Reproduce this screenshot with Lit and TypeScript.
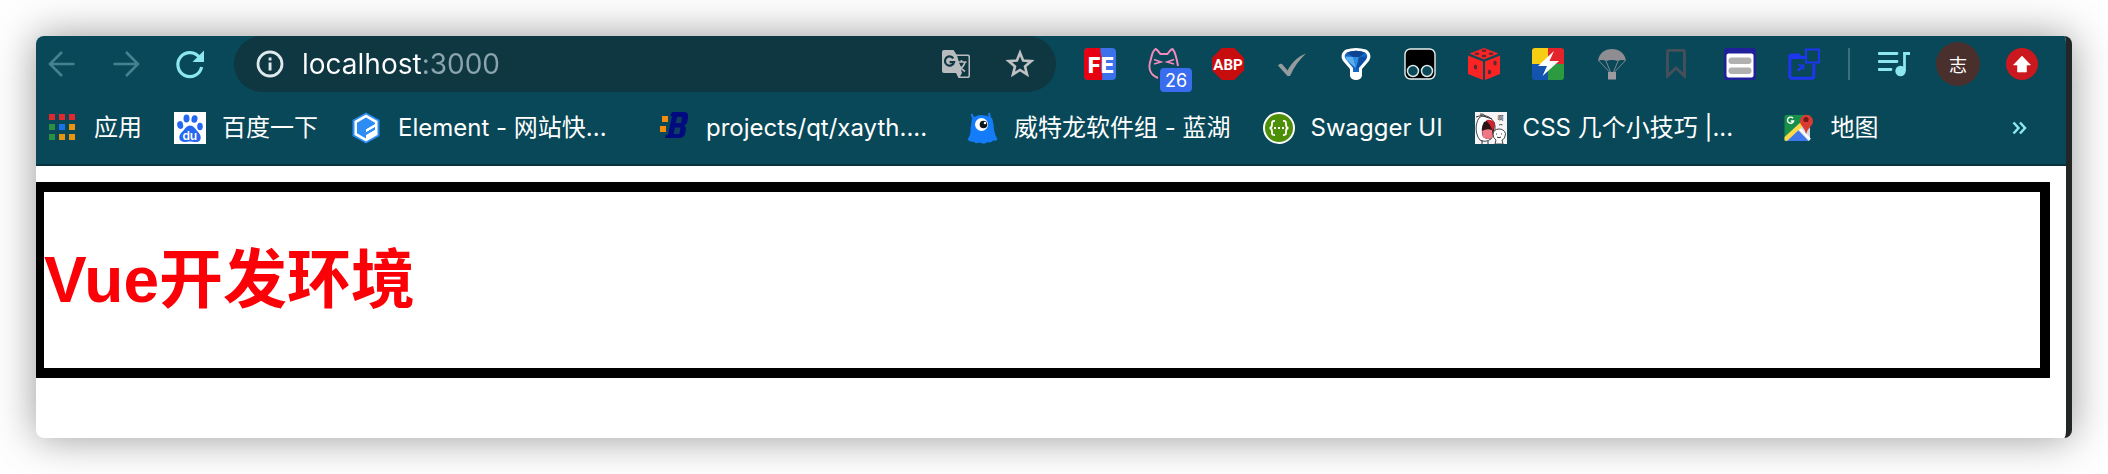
import { LitElement, html, svg, css, nothing, type TemplateResult } from "lit";
import { customElement, property } from "lit/decorators.js";
import { classMap } from "lit/directives/class-map.js";

const icons: Record<string, TemplateResult> = {
  back: svg`<path d="M28.500 16H4.500M16 4 4 16l12 12" fill="none" stroke="#44828f" stroke-width="2.600"/>`,
  forward: svg`<path d="M3.500 16h24M16 4l12 12-12 12" fill="none" stroke="#44828f" stroke-width="2.600"/>`,
  reload: svg`<path d="M25.500 9.500A12 12 0 1 0 27.600 19" fill="none" stroke="#8ce8ee" stroke-width="3.200"/><path d="M30 2.500V14H18.500Z" fill="#8ce8ee"/>`,
  info: svg`<circle cx="16" cy="16" r="12" fill="none" stroke="#dfe8ea" stroke-width="2.800"/><path d="M14.600 9.500h2.900v2.900h-2.900zM14.600 14.600h2.900v8h-2.900z" fill="#dfe8ea"/>`,
  translate: svg`<path d="M4 2h9.500l3 4.500H28a2 2 0 0 1 2 2V28a2 2 0 0 1-2 2H18.500L16 25H4a2 2 0 0 1-2-2V4a2 2 0 0 1 2-2z" fill="#b9bcbf"/><path d="M17.200 8H27.500a1 1 0 0 1 1 1V27.500a1 1 0 0 1-1 1H20l2-3.500z" fill="#0f3742"/><path d="M13.300 10.400A4.600 4.600 0 1 0 14 14.200H9.600" fill="none" stroke="#0f3742" stroke-width="2.200"/><path d="M16.500 14h10M21.500 12v2M25 14c-1 4-4 7-7 9M18.500 16c1.500 3.500 4 6 6.500 7.500" fill="none" stroke="#b9bcbf" stroke-width="1.700"/>`,
  star: svg`<path d="m16 4.800 3.100 7.700 8.200.6-6.300 5.300 2 8-7-4.400-7 4.400 2-8-6.300-5.300 8.200-.6z" fill="none" stroke="#bfc1c3" stroke-width="2.600"/>`,
  fe: svg`<rect width="32" height="32" rx="4" fill="#3b71ea"/><path d="M4 0h12.500c-1 5 2.500 9 1 15-1.500 6 2 11 .5 17H4a4 4 0 0 1-4-4V4a4 4 0 0 1 4-4z" fill="#e60012"/><text x="17" y="24.500" text-anchor="middle" font-family="Inter, sans-serif" font-weight="800" font-size="22" fill="#fff">FE</text>`,
  cat: svg`<path d="M10 30C2 27 0 20 2.500 12.500 4 8 4 3 7.500 1c2.500 1 3.500 3.500 5 5h7C21 4 22.500 1.500 24.500 1c3 3 4 8 5.500 17" fill="none" stroke="#f28bbd" stroke-width="2"/><path d="m6 11.500 7 2.500-7 2M26 11.500 19 14l7 2" fill="none" stroke="#f28bbd" stroke-width="1.600"/>`,
  abp: svg`<path d="M9.700 0h12.600L32 9.700v12.600L22.300 32H9.700L0 22.300V9.700z" fill="#c70d0d"/><text x="16" y="21.500" text-anchor="middle" font-family="Roboto, sans-serif" font-weight="700" font-size="15" fill="#fff">ABP</text>`,
  check: svg`<path d="M2 17.500c1.500-1.800 3.500-2.200 4.500-1l5 6C16 14 22 8.500 30 5.500 23 12 18 19 14 28h-2.500z" fill="#969b9e"/>`,
  diamond: svg`<path d="M6 1.500Q16-1.500 26 1.500C30.500 4 32 9 28.500 13.500L22 21v6.500a6 4.500 0 0 1-12 0V21L3.500 13.500C0 9 1.500 4 6 1.500z" fill="#fff"/><path d="M7 4.500q9-3.500 18 0c2.800 2 2.800 4.500 1 7L19 20v4h-6v-4l-7-8.500c-1.800-2.500-1.800-5 1-7z" fill="#1668c4"/><path d="M7 4.500q9-3.500 18 0l-6 4.500h-6z" fill="#0b4490"/><path d="m5.500 8.500 7.500.5 3 11-10-8.500z" fill="#5ab0ee"/><path d="M13 9h6l-3 11z" fill="#2f8de0"/><path d="m19 9 7.500-.5-.5 3L16 22z" fill="#0c4fa5"/>`,
  monkey: svg`<rect x="1" y="1" width="30" height="30" rx="5.500" fill="#000" stroke="#e8f0f0" stroke-width="1.400"/><circle cx="9" cy="23" r="5.500" fill="#0a4757" stroke="#d7e6e8" stroke-width="1.500"/><circle cx="23" cy="23" r="5.500" fill="#0a4757" stroke="#d7e6e8" stroke-width="1.500"/>`,
  dice: svg`<path d="m16 0 14.500 5.500L16 11.500 1.500 5.500zM0 7.500l15 6V32L0 26zM32 7.500l-15 6V32l15-6z" fill="#fb2424"/><g fill="#5b2a33"><ellipse cx="16" cy="2.800" rx="2.400" ry="1.300"/><ellipse cx="9" cy="5.700" rx="2.400" ry="1.300"/><ellipse cx="16" cy="8" rx="2.400" ry="1.300"/><ellipse cx="23" cy="5.700" rx="2.400" ry="1.300"/><ellipse cx="7.500" cy="19" rx="1.700" ry="2.500"/><ellipse cx="27" cy="15" rx="1.700" ry="2.500"/><ellipse cx="21.500" cy="24" rx="1.700" ry="2.500"/></g>`,
  bolt: svg`<path d="M3 0h13v16H0V3a3 3 0 0 1 3-3z" fill="#f7cf12"/><path d="M16 0h13a3 3 0 0 1 3 3v13H16z" fill="#e3242b"/><path d="M0 16h16v16H3a3 3 0 0 1-3-3z" fill="#1355ae"/><path d="M16 16h16v13a3 3 0 0 1-3 3H16z" fill="#2c9a3e"/><path d="M22 3 6 18h9l-4.500 10L27 13h-9.500z" fill="#fff"/>`,
  parachute: svg`<path d="M2 13C3 5 9 1 16 1s13 4 14 12c-2.500-1.500-6-1.500-8 0-3.500-1.500-8.500-1.500-12 0-2-1.500-5.500-1.500-8 0z" fill="#8e8e92"/><path d="m3 13 10.500 11M10 13l4.500 11M22 13l-4.500 11M29 13 18.500 24" stroke="#7d868c" stroke-width="1"/><path d="M12 24h8v7.500h-8z" fill="#9c9a9f"/>`,
  ribbon: svg`<path d="M9 2.300h14a1.500 1.500 0 0 1 1.500 1.500V28L16 20l-8.500 8V3.800A1.500 1.500 0 0 1 9 2.300z" fill="none" stroke="#47505a" stroke-width="2.800"/>`,
  card: svg`<rect width="32" height="32" rx="3" fill="#20219a"/><rect x="2.500" y="5.500" width="27" height="24" rx="2" fill="#fff"/><rect x="4.500" y="9.500" width="23" height="6.500" rx="3.200" fill="#b0b0b0"/><rect x="4.500" y="19.500" width="23" height="6.500" rx="3.200" fill="#b0b0b0"/>`,
  folder: svg`<path d="M17 9.500H12.500L10.500 7H3.500A1.800 1.800 0 0 0 1.800 8.800V28.500A1.800 1.800 0 0 0 3.600 30.300H24A1.800 1.800 0 0 0 25.800 28.500V16" fill="none" stroke="#1f36f0" stroke-width="3"/><path d="M2 8h9l2 3H2z" fill="#1f36f0"/><rect x="18" y="1.500" width="13" height="13" fill="none" stroke="#1f36f0" stroke-width="2"/><path d="M9 16.500h7.500v6l-2-2-4 3-1.500-2 4-2.500z" fill="#1f36f0"/>`,
  music: svg`<path d="M1 5.500h18M1 13.500h18M1 21.500h12" stroke="#8ce8ee" stroke-width="2.800" stroke-linecap="round"/><path d="M27 5.500h5" stroke="#8ce8ee" stroke-width="3"/><path d="M26.500 4v19" stroke="#8ce8ee" stroke-width="2.800"/><circle cx="22.500" cy="23" r="5.200" fill="#8ce8ee"/>`,
  update: svg`<circle cx="16" cy="16" r="16" fill="#cb171e"/><path d="m16 8 8.500 9h-4v7h-9v-7h-4z" fill="#fff" stroke="#fff" stroke-width=".6"/>`,
  apps: svg`<path d="M3 2h6v6H3zM13 2h6v6h-6zM23 2h6v6h-6z" fill="#e3272c"/><path d="M3 12h6v6H3zM3 22h6v6H3z" fill="#2b8f46"/><path d="M13 12h6v6h-6z" fill="#1a73e8"/><path d="M23 12h6v6h-6zM13 22h6v6h-6zM23 22h6v6h-6z" fill="#e8940f"/>`,
  baidu: svg`<path d="M0 0h32v32H0z" fill="#fff"/><g fill="#2468f2"><ellipse cx="12.500" cy="6.500" rx="3" ry="4"/><ellipse cx="20.500" cy="7" rx="3" ry="3.800" transform="rotate(12 20.500 7)"/><ellipse cx="6.200" cy="13" rx="3" ry="3.900" transform="rotate(-12 6.200 13)"/><ellipse cx="26" cy="14.500" rx="2.800" ry="3.700"/><path d="M16 13.500c4 0 5.500 4 8.500 7 3.500 3.500 3 9.500-2 9.500-3 .2-4-.6-6.500-.6S12.500 30.200 10 30c-5.500-.5-6-6.500-2-10 3-2.500 4-6.500 8-6.500z"/></g><text x="15.800" y="27.500" text-anchor="middle" font-family="Inter, sans-serif" font-weight="600" font-size="12" fill="#fff">du</text>`,
  element: svg`<path d="M16 .5 29.500 8v16L16 31.500 2.500 24V8z" fill="#2e8cf5"/><path d="M16 2.500 27.500 9v14L16 29.500 4.500 23V9z" fill="#fff"/><path d="M16 5.500 25 10.700v1.500l-9 5.200v2.600l9-5.200v3.200L16 23.200v3.300l-9-5.200V10.700z" fill="#2e8cf5"/><path d="m16 17.400 9-5.200v2.600L16 20zM16 23.200 25 18v2.600l-9 5.200z" fill="#fff"/>`,
  blog: svg`<path d="M4 4h6v6H4zM2 14h6v6H2z" fill="#f58c10"/><path d="M14 0h13q4 1 3 6l-1 5-2.500 2.500L28 16l-1 6q-1.500 4-6 4H7l1-3h2l4-19h-2z" fill="#020a80"/><path d="m19 5-1.200 6H23l1-6zM17 15.500 15.600 22h5.700l1.200-6.500z" fill="#10405f"/>`,
  lanhu: svg`<path d="M8 8 5.500 2M24 7l-1-6" stroke="#1b7cf5" stroke-width="2"/><path d="M6 6.500Q10 3 15.500 3T26 6q2 6 2 12 1 5 3.500 9.500-2 2-4.500 1-2 3-5.500 1.500-3 3-8 .5-4 2-6-1-3.500 1-6-2Q5 23 4.500 16z" fill="#147cf8"/><circle cx="15.500" cy="12.500" r="6.500" fill="#fff"/><circle cx="17.500" cy="12.500" r="3.800" fill="#10151c"/><circle cx="19" cy="11" r="1.300" fill="#fff"/>`,
  swagger: svg`<circle cx="16" cy="16" r="15" fill="#4d8f06" stroke="#fff" stroke-width="2"/><path d="M12 9c-3.500-.3-3 1.500-3 3.500S8.500 16 6.500 16c2 0 2.500 1.500 2.500 3.500s-.5 3.800 3 3.500M20 9c3.500-.3 3 1.500 3 3.500s.5 3.500 2.500 3.500c-2 0-2.500 1.500-2.500 3.500s.5 3.800-3 3.500" fill="none" stroke="#fff" stroke-width="1.800"/><path d="M11 15h2v2h-2zM15 15h2v2h-2zM19 15h2v2h-2z" fill="#fff"/>`,
  meme: svg`<path d="M0 0h32v32H0z" fill="#f6f4f6"/><path d="M4 6C0 12 0 22 5 28q5 3 11-1l4-9q1-9-6-13Q8 2 4 6z" fill="#fff" stroke="#333" stroke-width=".9"/><path d="M1 5q5-3 10 0 3 1 6 2M5 2q4-1 6 3" fill="none" stroke="#333" stroke-width="1"/><path d="M9 10q6-3 11 1l-2 14q-5 4-10 0-3-8 1-15z" fill="#2b1215"/><path d="M11 8q7-1 9 4l-2 7q-3-7-7-11z" fill="#cc2433"/><path d="M7 19q5-3 10-1l1 7q-5 4-10 0z" fill="#f27785"/><path d="M18 22q1-5 6-5t6.500 4.500Q30 27 27 28l1 4h-8l1-4q-3-2-3-6z" fill="#fff" stroke="#444" stroke-width="1"/><path d="M21.500 21.500v1M26.500 21.500v1M22 25q2 1.500 4 0M7 28v4M13 29v3" fill="none" stroke="#333" stroke-width="1"/><text x="25.500" y="8" text-anchor="middle" font-family="'Noto Sans CJK SC', sans-serif" font-size="6" fill="#222">啊</text><path d="M24 13q1.500-1 3.500 0" fill="none" stroke="#444" stroke-width="1"/>`,
  map: svg`<path d="M3 3h22a2 2 0 0 1 2 2v22a2 2 0 0 1-2 2H3a1.500 1.500 0 0 1-1.500-1.500v-23A1.500 1.500 0 0 1 3 3z" fill="#178f49"/><path d="M13 17 27 10v17a2 2 0 0 1-2 2z" fill="#d5d9de"/><path d="m14.500 17.500 10.500 11-.5.500h-22z" fill="#3f77ee"/><path d="M1.500 25 19 9v6L4 29l-2.500-.5z" fill="#fbd849"/><path d="m17 17 10 10.500" stroke="#fff" stroke-width="2.500"/><path d="M23 22q-.5-4-4-8a6.500 6.500 0 1 1 9 0q-4 4-5 8z" fill="#d93a32"/><circle cx="23" cy="7.500" r="2.600" fill="#75191b"/><path d="M10 6.200A3.100 3.100 0 1 0 10.600 9H7.800" fill="none" stroke="#fff" stroke-width="1.400"/>`,
  more: svg`<path d="m9.500 10.500 5 5.500-5 5.500M16 10.500l5 5.500-5 5.500" fill="none" stroke="#8ce8ee" stroke-width="2.500"/>`,
};

const icon = (name: string) =>
  html`<svg class="icon" viewBox="0 0 32 32" aria-hidden="true">${icons[name]}</svg>`;

const iconStyles = css`
  .icon { display: block; width: 32px; height: 32px; flex: none; }
  button, a { color: inherit; font: inherit; text-decoration: none; }
  button { padding: 0; border: 0; background: none; cursor: pointer; flex: none; }
`;

interface Extension { icon: string; label: string; badge?: string }
interface Bookmark { icon: string; text: string; elided?: boolean }

const extensions: Extension[] = [
  { icon: "fe", label: "FE" },
  { icon: "cat", label: "Cat", badge: "26" },
  { icon: "abp", label: "Adblock Plus" },
  { icon: "check", label: "Check" },
  { icon: "diamond", label: "Diamond" },
  { icon: "monkey", label: "Tampermonkey" },
  { icon: "dice", label: "Dice" },
  { icon: "bolt", label: "Bolt" },
  { icon: "parachute", label: "Parachute" },
  { icon: "ribbon", label: "Bookmark" },
  { icon: "card", label: "Card" },
  { icon: "folder", label: "Folder" },
];

const bookmarks: Bookmark[] = [
  { icon: "apps", text: "应用" },
  { icon: "baidu", text: "百度一下" },
  { icon: "element", text: "Element - 网站快...", elided: true },
  { icon: "blog", text: "projects/qt/xayth....", elided: true },
  { icon: "lanhu", text: "威特龙软件组 - 蓝湖" },
  { icon: "swagger", text: "Swagger UI" },
  { icon: "meme", text: "CSS 几个小技巧 |...", elided: true },
  { icon: "map", text: "地图" },
];

@customElement("browser-toolbar")
export class BrowserToolbar extends LitElement {
  static styles = [iconStyles, css`
    :host { display: flex; align-items: center; gap: 28px; padding: 0 28px 0 10px; }
    .nav, .extensions { display: flex; gap: 32px; }
    .address {
      flex: 1; min-width: 0; height: 56px; box-sizing: border-box;
      display: flex; align-items: center; gap: 32px;
      padding: 0 20px; border-radius: 28px; background: #0f3742;
    }
    .field { flex: 1; min-width: 0; display: flex; align-items: center; gap: 16px; }
    .url {
      flex: 1; min-width: 0; padding: 0; border: 0; outline: 0;
      font: 28px/40px Inter, "Noto Sans CJK SC", sans-serif;
      color: transparent; caret-color: #fff;
      background: linear-gradient(90deg, #fff 120px, #8aa5ad 120px);
      -webkit-background-clip: text; background-clip: text;
    }
    .extension { position: relative; }
    .badge {
      position: absolute; left: 12px; top: 20px; width: 32px; height: 24px; border-radius: 4px;
      background: #3a6cf0; color: #fff; font: 18px/26px Inter, sans-serif; text-align: center;
    }
    .divider { width: 2px; height: 32px; background: #39707d; flex: none; }
    .account { display: flex; align-items: center; gap: 26px; }
    .avatar {
      width: 44px; height: 44px; border-radius: 50%; background: #4a302d; color: #fff;
      font: 18px/44px "Noto Sans CJK SC", sans-serif;
    }
  `];

  render() {
    return html`
      <div class="nav">
        <button aria-label="Back">${icon("back")}</button>
        <button aria-label="Forward">${icon("forward")}</button>
        <button aria-label="Reload">${icon("reload")}</button>
      </div>
      <div class="address">
        <div class="field">
          <button aria-label="Site information">${icon("info")}</button>
          <input class="url" type="text" aria-label="Address" spellcheck="false" .value=${"localhost:3000"} />
        </div>
        <button aria-label="Translate">${icon("translate")}</button>
        <button aria-label="Add bookmark">${icon("star")}</button>
      </div>
      <div class="extensions">
        ${extensions.map((e) => html`
          <button class="extension" aria-label=${e.label}>
            ${icon(e.icon)}${e.badge ? html`<span class="badge">${e.badge}</span>` : nothing}
          </button>`)}
      </div>
      <span class="divider"></span>
      <div class="account">
        <button aria-label="Media">${icon("music")}</button>
        <button class="avatar">志</button>
        <button aria-label="Update">${icon("update")}</button>
      </div>`;
  }
}

@customElement("bookmark-bar")
export class BookmarkBar extends LitElement {
  @property({ attribute: false }) items: Bookmark[] = [];

  static styles = [iconStyles, css`
    :host {
      display: flex; align-items: center; justify-content: space-between;
      height: 72px; padding: 0 30px 0 10px; color: #fff;
      font: 24px/36px Inter, "Noto Sans CJK SC", sans-serif;
    }
    .list { display: flex; gap: 32px; min-width: 0; }
    .bookmark { display: flex; align-items: center; gap: 16px; white-space: nowrap; }
    .elided { width: 228px; }
  `];

  render() {
    return html`
      <nav class="list">
        ${this.items.map((b) => html`
          <a class="bookmark" href="#">
            ${icon(b.icon)}<span class=${classMap({ elided: !!b.elided })}>${b.text}</span>
          </a>`)}
      </nav>
      <button aria-label="More bookmarks">${icon("more")}</button>`;
  }
}

@customElement("app-root")
export class AppRoot extends LitElement {
  static styles = css`
    :host {
      display: flex; box-sizing: border-box; min-height: 100vh; padding: 36px;
      background: #fefefe; overflow: hidden;
    }
    .window {
      flex: 1; min-width: 0; display: flex; flex-direction: column; overflow: hidden;
      border-radius: 8px; border-right: 6px solid #232626; background: #fff;
      box-shadow: 0 0 40px rgba(0, 0, 0, 0.4);
    }
    .chrome { background: #084858; border-bottom: 2px solid #08323e; }
    .page { padding: 16px 16px 60px 0; }
    .box { margin-left: -2px; border: 10px solid #000; }
    .title {
      margin: 0; padding: 40px 0; color: #fb0007;
      font: 600 64px/96px "Liberation Sans", "Noto Sans CJK SC", sans-serif;
    }
  `;

  render() {
    return html`
      <div class="window">
        <header class="chrome">
          <browser-toolbar></browser-toolbar>
          <bookmark-bar .items=${bookmarks}></bookmark-bar>
        </header>
        <main class="page">
          <div class="box"><h1 class="title">Vue开发环境</h1></div>
        </main>
      </div>`;
  }
}
